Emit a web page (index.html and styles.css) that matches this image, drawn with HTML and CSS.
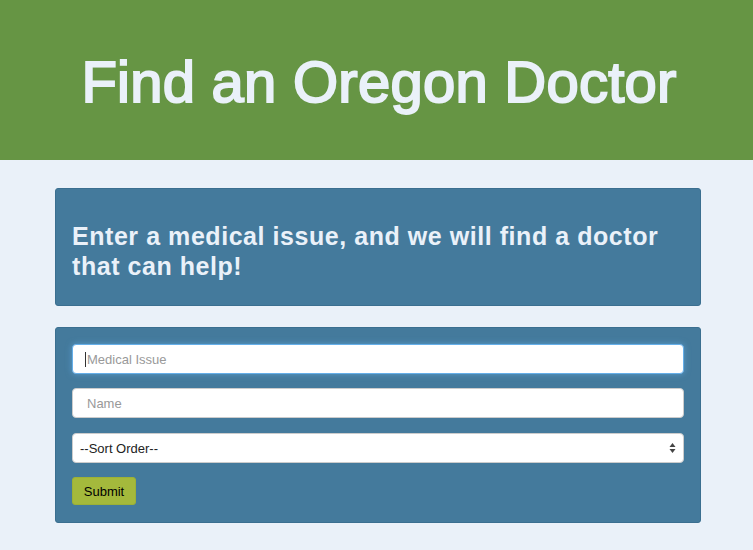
FILE: index.html
```html
<!DOCTYPE html>
<html>
<head>
<meta charset="utf-8">
<link rel="stylesheet" href="styles.css">
</head>
<body>
<header class="hero">
  <h1 class="hero-title">Find an Oregon Doctor</h1>
</header>
<main class="content">
  <section class="panel intro">
    <h2 class="intro-text">Enter a medical issue, and we will find a doctor that can help!</h2>
  </section>
  <section class="panel form-panel">
    <form class="search-form">
      <div class="field field-focus"><span class="caret"></span><span class="ph">Medical Issue</span></div>
      <div class="field"><span class="ph">Name</span></div>
      <div class="field select"><span class="sel-text">--Sort Order--</span>
        <svg class="arrows" width="7" height="12" viewBox="0 0 7 12"><path d="M3.5 1 L6.5 5 L0.5 5 Z M3.5 11 L0.5 7 L6.5 7 Z" fill="#444"/></svg>
      </div>
      <div class="actions"><button type="button" class="submit">Submit</button></div>
    </form>
  </section>
</main>
</body>
</html>
```
FILE: styles.css
```css
html, body {
  margin: 0;
  padding: 0;
  background: #eaf1f9;
  font-family: "Liberation Sans", Arial, sans-serif;
}
.hero {
  background: #669544;
  height: 160px;
  display: flex;
  align-items: center;
  justify-content: center;
}
.hero-title {
  margin: 0;
  color: #eaf1f9;
  font-size: 58px;
  font-weight: normal;
  -webkit-text-stroke: 2px #eaf1f9;
  letter-spacing: 0.25px;
  line-height: 1;
  padding-top: 4px;
  padding-left: 5px;
}
.content {
  padding: 28px 52px 20px 55px;
  display: flex;
  flex-direction: column;
  gap: 21px;
}
.panel {
  background: #447a9c;
  border: 1px solid #3b6f90;
  border-radius: 3px;
  padding: 16px;
}
.form-panel {
  padding-bottom: 17px;
}
.intro-text {
  margin: 16px 0 8px;
  color: #eaf1f9;
  font-size: 25px;
  line-height: 30px;
  font-weight: bold;
  letter-spacing: 0.55px;
}
.search-form {
  display: flex;
  flex-direction: column;
  gap: 14px;
}
.field {
  height: 30px;
  box-sizing: border-box;
  background: #fff;
  border: 1px solid #ccc;
  border-radius: 4px;
  display: flex;
  align-items: center;
  padding: 0 14px;
  font-size: 13px;
  position: relative;
}
.field-focus {
  border-color: #66afe9;
  box-shadow: 0 0 6px rgba(102,175,233,0.6);
  padding-left: 12px;
}
.caret {
  width: 1px;
  height: 15px;
  background: #333;
  margin-right: 1px;
}
.ph {
  color: #999;
}
.select {
  padding: 0 7px;
  margin-top: 1px;
}
.sel-text {
  color: #222;
  flex: 1;
}
.arrows {
  display: block;
}
.actions {
  display: flex;
}
.submit {
  background: #a4b93c;
  border: 1px solid #9cb136;
  border-radius: 3px;
  height: 28px;
  width: 64px;
  font-family: "Liberation Sans", Arial, sans-serif;
  font-size: 13px;
  color: #000;
  padding: 0;
}
```
